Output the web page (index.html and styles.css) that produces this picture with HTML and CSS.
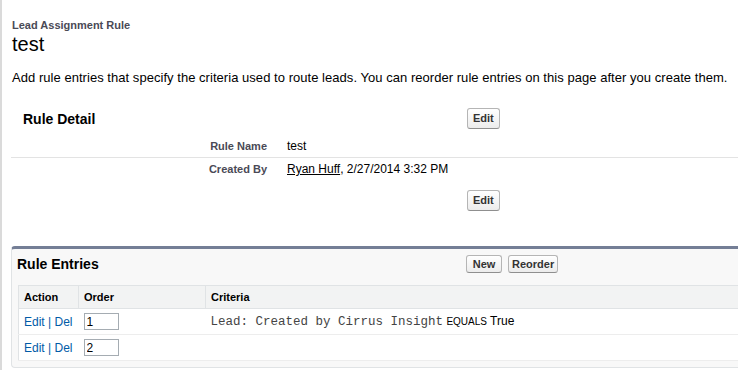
FILE: index.html
```html
<!DOCTYPE html>
<html lang="en">
<head>
    <meta charset="UTF-8">
    <meta name="viewport" content="width=device-width, initial-scale=1.0">
    <title>Lead Assignment Rule: test</title>
    <link rel="stylesheet" href="styles.css">
</head>
<body>
    <div class="page">
        <div class="page-head">
            <h2 class="ptype">Lead Assignment Rule</h2>
            <h1 class="pname">test</h1>
        </div>
        <p class="desc">Add rule entries that specify the criteria used to route leads. You can reorder rule entries on this page after you create them.</p>

        <div class="detail">
            <div class="pb-head">
                <h3 class="pb-title">Rule Detail</h3>
                <div class="pb-buttons"><button class="btn">Edit</button></div>
            </div>
            <div class="detail-row">
                <div class="label">Rule Name</div>
                <div class="value">test</div>
            </div>
            <div class="detail-row">
                <div class="label">Created By</div>
                <div class="value"><a href="#" class="user-link">Ryan Huff</a>, 2/27/2014 3:32 PM</div>
            </div>
            <div class="pb-bottom">
                <button class="btn">Edit</button>
            </div>
        </div>

        <div class="entries">
            <div class="pb-head">
                <h3 class="pb-title">Rule Entries</h3>
                <div class="pb-buttons">
                    <button class="btn">New</button>
                    <button class="btn">Reorder</button>
                </div>
            </div>
            <table class="list">
                <colgroup>
                    <col style="width: 60px">
                    <col style="width: 127px">
                    <col>
                </colgroup>
                <thead>
                    <tr>
                        <th>Action</th>
                        <th>Order</th>
                        <th>Criteria</th>
                    </tr>
                </thead>
                <tbody>
                    <tr>
                        <td class="actions"><a href="#">Edit</a> | <a href="#">Del</a></td>
                        <td><input type="text" class="order-input" value="1"></td>
                        <td><span class="mono">Lead: Created by Cirrus Insight</span> <span class="op">EQUALS</span> True</td>
                    </tr>
                    <tr>
                        <td class="actions"><a href="#">Edit</a> | <a href="#">Del</a></td>
                        <td><input type="text" class="order-input" value="2"></td>
                        <td></td>
                    </tr>
                </tbody>
            </table>
        </div>
    </div>
</body>
</html>
```

FILE: styles.css
```css
body {
    margin: 0;
    font-family: Arial, "Liberation Sans", sans-serif;
    color: #000;
    background: #fff;
    overflow: hidden;
}
.page {
    border-left: 2px solid #dadada;
    min-height: 370px;
    box-sizing: border-box;
    padding: 18px 0 0 9px;
}
.page-head {
    padding-left: 1px;
}
.ptype {
    margin: 0;
    font-size: 11px;
    line-height: 14px;
    font-weight: bold;
    color: #4a4a56;
}
.pname {
    margin: 0;
    font-size: 20px;
    line-height: 24px;
    font-weight: normal;
}
.desc {
    margin: 14px 0 0;
    padding-left: 1px;
    font-size: 13px;
    line-height: 16px;
    letter-spacing: 0.04px;
    white-space: nowrap;
}

/* buttons */
.btn {
    font-family: Arial, "Liberation Sans", sans-serif;
    font-size: 11px;
    font-weight: bold;
    line-height: 13px;
    color: #333;
    background: linear-gradient(#ffffff, #ececec);
    border: 1px solid #b5b5b5;
    border-bottom-color: #8f8f8f;
    border-radius: 3px;
    padding: 3px 5px;
    margin: 0;
    cursor: pointer;
}

/* rule detail */
.detail .pb-head {
    display: grid;
    grid-template-columns: 456px auto;
    align-items: center;
    height: 29px;
    margin-top: 18px;
}
.pb-title {
    margin: 0;
    font-size: 14px;
    font-weight: bold;
    padding-left: 12px;
}
.detail-row {
    display: grid;
    grid-template-columns: 266px auto;
    align-items: center;
    height: 22px;
}
.pb-head + .detail-row {
    margin-top: 2px;
    border-bottom: 1px solid #e3e3e3;
}
.label {
    text-align: right;
    padding-right: 10px;
    font-size: 11px;
    font-weight: bold;
    color: #4a4a56;
}
.value {
    padding-left: 10px;
    font-size: 12px;
}
.user-link {
    color: #000;
    text-decoration: underline;
}
.pb-bottom {
    padding: 10px 0 0 456px;
}

/* rule entries */
.entries {
    margin-top: 35px;
    background: #f8f8f8;
    border-top: 3px solid #747e96;
    border-left: 1px solid #e0e3e5;
    border-bottom: 1px solid #e0e3e5;
    border-top-left-radius: 4px;
    border-bottom-left-radius: 4px;
    padding: 0 0 6px 6px;
}
.entries .pb-head {
    display: grid;
    grid-template-columns: 454px auto;
    align-items: center;
    height: 30px;
    margin-left: -6px;
}
.entries .pb-title {
    padding-left: 5px;
}
.entries .pb-buttons {
    display: flex;
    gap: 6px;
}
.entries .btn {
    padding: 1px 3px;
    min-width: 36px;
    line-height: 14px;
}
.list {
    margin-top: 6px;
    width: 100%;
    table-layout: fixed;
    border-collapse: collapse;
    background: #fff;
    border: 1px solid #e0e3e5;
    border-right: none;
}
.list th {
    background: #f2f3f3;
    text-align: left;
    font-size: 11px;
    font-weight: bold;
    height: 22px;
    padding: 0 5px;
    border-bottom: 1px solid #e0e3e5;
    border-left: 1px solid #e0e3e5;
}
.list th:first-child {
    border-left: none;
}
.list td {
    height: 25px;
    padding: 0 5px;
    font-size: 12px;
    border-bottom: 1px solid #ededed;
    white-space: nowrap;
}
.actions,
.actions a {
    color: #015ba7;
    text-decoration: none;
}
.order-input {
    box-sizing: border-box;
    width: 35px;
    height: 17px;
    padding: 0 2px;
    margin: 0;
    border: 1px solid #a5acb2;
    font-family: Arial, "Liberation Sans", sans-serif;
    font-size: 12px;
    vertical-align: middle;
}
.mono {
    font-family: "Liberation Mono", "Courier New", monospace;
    font-size: 12.5px;
    color: #444;
}
.op {
    font-size: 10px;
}
```
